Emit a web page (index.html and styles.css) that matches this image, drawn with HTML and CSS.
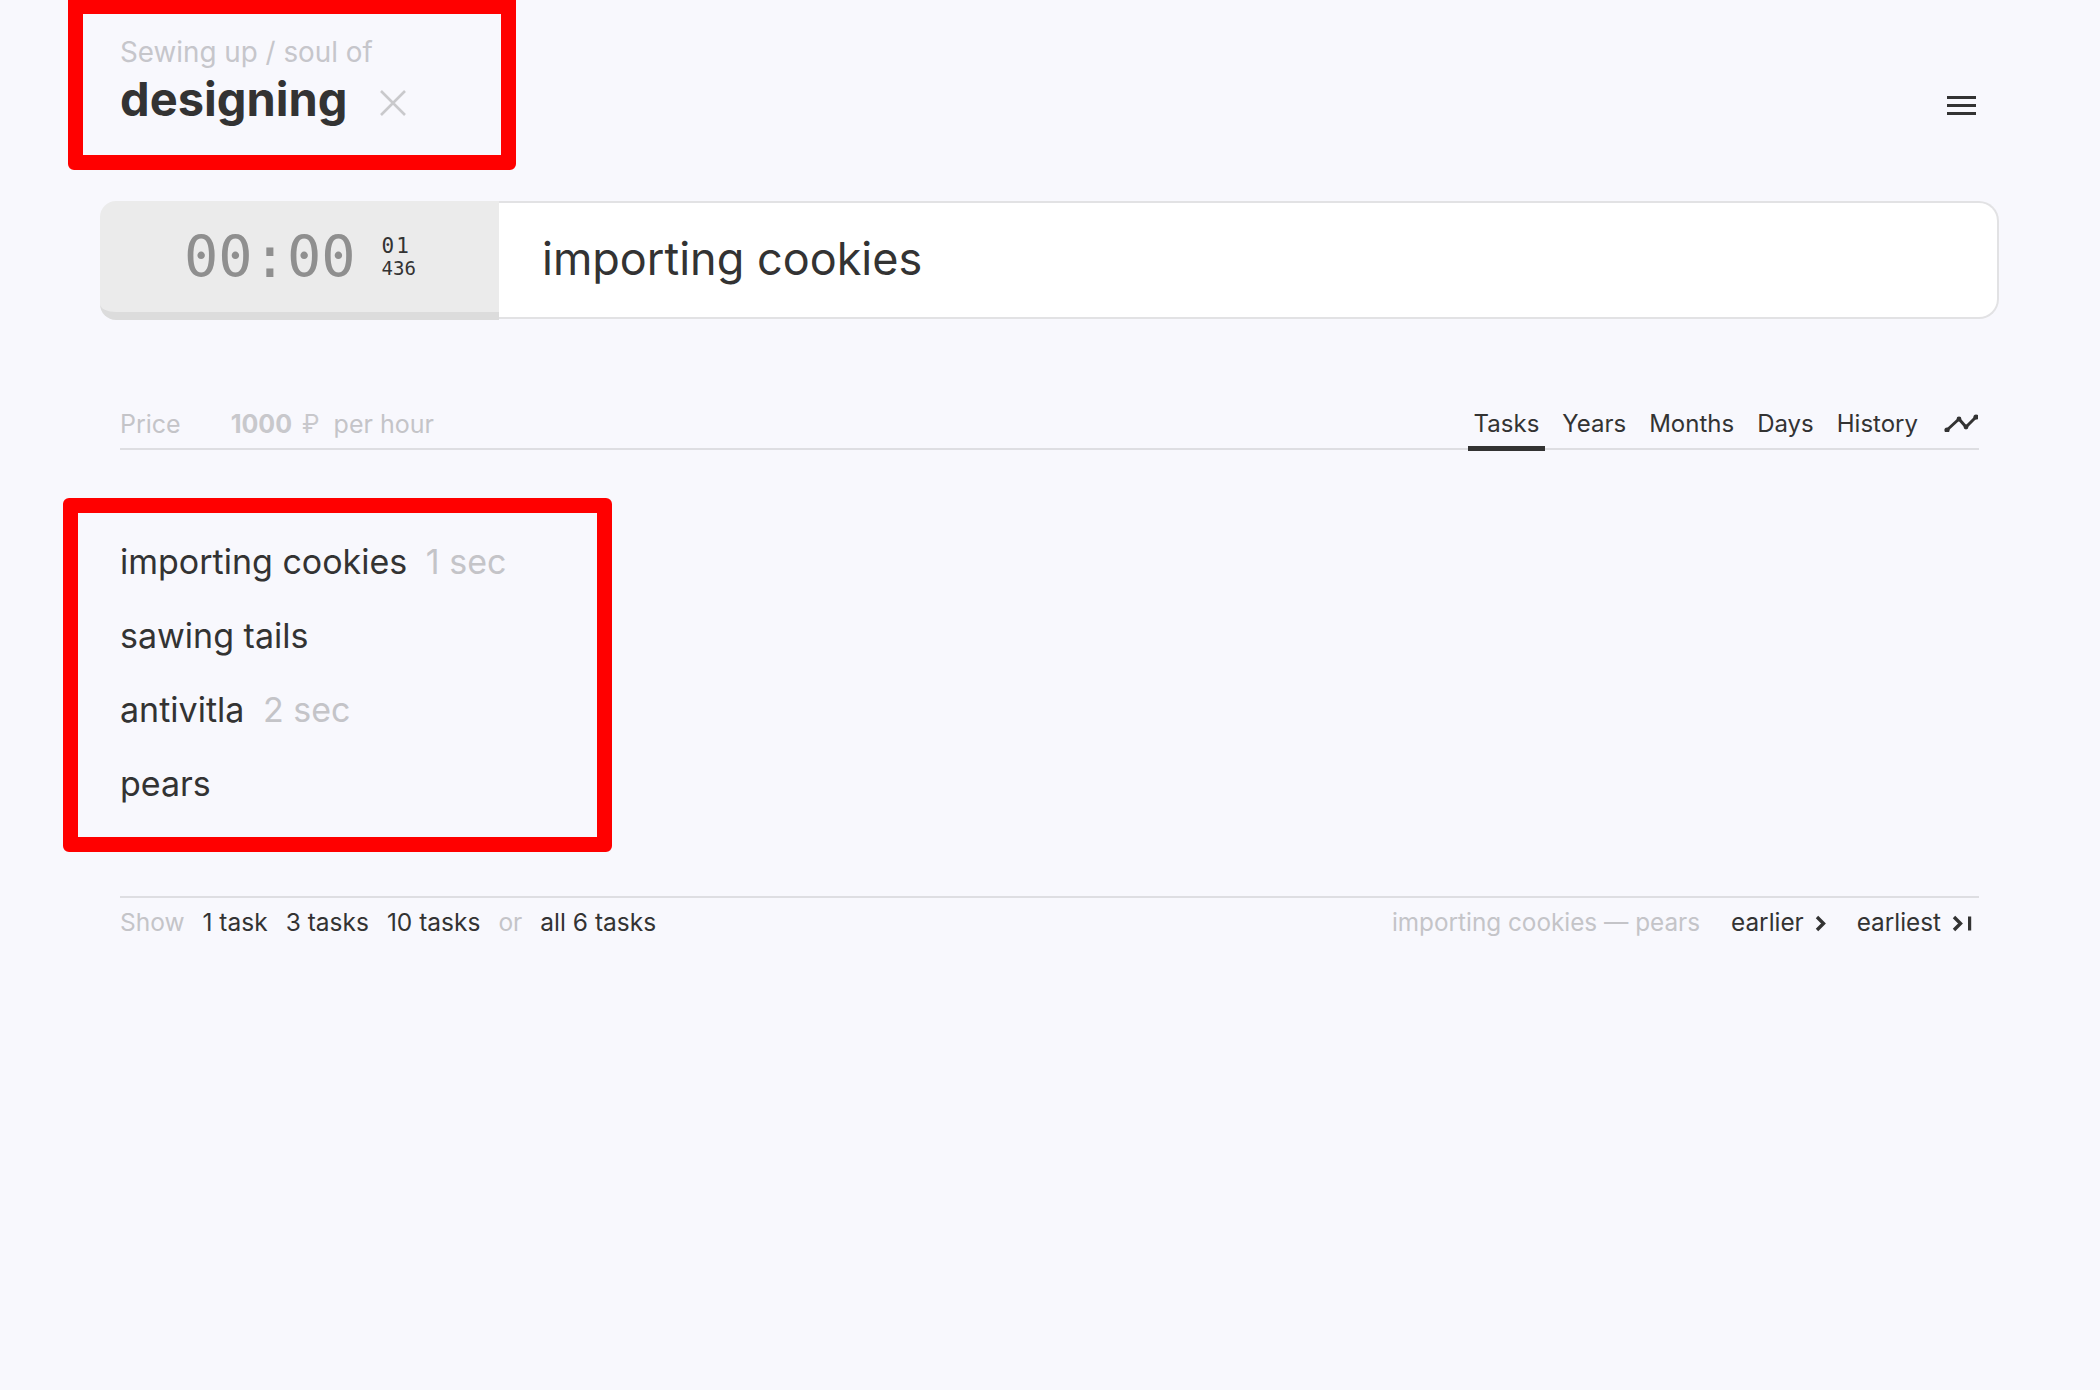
FILE: index.html
```html
<!DOCTYPE html>
<html lang="en">
<head>
<meta charset="utf-8">
<title>designing</title>
<link rel="stylesheet" href="styles.css">
</head>
<body>
<div class="app">
  <header class="top">
    <div class="crumb-box">
      <div class="crumb">Sewing up / soul of</div>
      <div class="title-row">
        <h1 class="title">designing</h1>
        <svg class="close" width="28" height="28" viewBox="0 0 28 28"><path d="M2 2 L26 26 M26 2 L2 26" stroke="#c9c9cc" stroke-width="2.6" fill="none"/></svg>
      </div>
    </div>
    <svg class="menu" width="29" height="20" viewBox="0 0 29 20"><rect x="0" y="0" width="29" height="3" fill="#333"/><rect x="0" y="8" width="29" height="3" fill="#333"/><rect x="0" y="16" width="29" height="3" fill="#333"/></svg>
  </header>

  <section class="timer-bar">
    <div class="timer">
      <span class="clock">00:00</span>
      <span class="sub"><span class="sub-min">01</span><span class="sub-ms">436</span></span>
    </div>
    <div class="task-input">importing cookies</div>
  </section>

  <nav class="bar">
    <div class="price">
      <span class="muted">Price</span>
      <span class="amount"><b>1000</b> ₽</span>
      <span class="muted">per hour</span>
    </div>
    <div class="tabs">
      <span class="tab active">Tasks</span>
      <span class="tab">Years</span>
      <span class="tab">Months</span>
      <span class="tab">Days</span>
      <span class="tab">History</span>
      <svg class="chart" width="34" height="18" viewBox="0 0 34 18"><polyline points="3,16 15,5 22,13 32,3" fill="none" stroke="#333" stroke-width="3" stroke-linejoin="round"/><circle cx="3" cy="16" r="2.6" fill="#333"/><circle cx="15" cy="5" r="2.4" fill="#333"/><circle cx="22" cy="13" r="2.4" fill="#333"/><circle cx="32" cy="3" r="2.6" fill="#333"/></svg>
    </div>
  </nav>

  <ul class="task-list">
    <li>importing cookies <span class="dur">1 sec</span></li>
    <li>sawing tails</li>
    <li>antivitla <span class="dur">2 sec</span></li>
    <li>pears</li>
  </ul>

  <footer class="foot">
    <div class="show">
      <span class="muted">Show</span>
      <span>1 task</span>
      <span>3 tasks</span>
      <span>10 tasks</span>
      <span class="muted">or</span>
      <span>all 6 tasks</span>
    </div>
    <div class="pager">
      <span class="muted">importing cookies — pears</span>
      <span class="pg">earlier <svg width="11" height="17" viewBox="0 0 11 17"><path d="M2 2 L8.5 8.5 L2 15" fill="none" stroke="#333" stroke-width="3.4"/></svg></span>
      <span class="pg">earliest <svg width="21" height="17" viewBox="0 0 21 17"><path d="M2 2 L8.5 8.5 L2 15" fill="none" stroke="#333" stroke-width="3.4"/><rect x="16" y="1.5" width="3.2" height="14" fill="#333"/></svg></span>
    </div>
  </footer>
</div>
</body>
</html>
```

FILE: styles.css
```css
* { box-sizing: border-box; }
html, body {
  margin: 0;
  padding: 0;
  background: #f8f8fd;
}
body {
  font-family: Inter, "Noto Sans", "Liberation Sans", sans-serif;
  color: #333;
}
.app {
  width: 2100px;
  min-height: 1390px;
}

/* header */
.top {
  display: flex;
  justify-content: space-between;
  align-items: flex-start;
  padding: 0 124px 0 68px;
}
.crumb-box {
  width: 448px;
  height: 170px;
  border: 15px solid #ff0000;
  border-top-width: 14px;
  border-radius: 0 0 6px 6px;
  padding: 22px 0 0 37px;
}
.crumb {
  font-size: 27.8px;
  line-height: 32px;
  color: #c6c6cb;
}
.title-row {
  display: flex;
  align-items: center;
  margin-top: 3px;
}
.title {
  margin: 0;
  font-size: 47px;
  line-height: 56px;
  font-weight: 700;
  color: #333;
}
.close {
  margin-left: 32px;
  margin-top: 8px;
}
.menu {
  margin-top: 96px;
}

/* timer bar */
.timer-bar {
  display: flex;
  margin: 31px 101px 0 100px;
  height: 119px;
}
.timer {
  width: 399px;
  height: 119px;
  background: #ebebeb;
  border-bottom: 8px solid #dcdcdc;
  border-radius: 16px 0 0 16px;
  display: flex;
  align-items: center;
  padding-left: 84px;
}
.clock {
  font-family: "DejaVu Sans Mono", "Liberation Mono", monospace;
  font-size: 57px;
  color: #8f8f8f;
  line-height: 1;
  margin-top: 2px;
}
.sub {
  display: flex;
  flex-direction: column;
  align-items: flex-start;
  margin-left: 26px;
  font-family: "DejaVu Sans Mono", "Liberation Mono", monospace;
  line-height: 22px;
  color: #333;
}
.sub-min {
  font-size: 21px;
  letter-spacing: 2px;
}
.sub-ms {
  font-size: 19px;
}
.task-input {
  flex: 1;
  height: 118px;
  background: #fff;
  border: 2px solid #e2e2e4;
  border-left: none;
  border-radius: 0 20px 20px 0;
  display: flex;
  align-items: center;
  padding-left: 43px;
  font-size: 45px;
  color: #333;
  padding-bottom: 4px;
}

/* nav bar */
.bar {
  display: flex;
  justify-content: space-between;
  align-items: flex-end;
  margin: 89px 121px 0 120px;
  border-bottom: 2px solid #dedee2;
  font-size: 24px;
  line-height: 30px;
}
.price {
  display: flex;
  padding-bottom: 9px;
  font-size: 25px;
}
.muted { color: #c4c4c8; }
.amount {
  color: #c8c8cc;
  margin-left: 50px;
  margin-right: 14px;
  word-spacing: 3px;
}
.amount b { font-weight: 700; }
.tabs {
  display: flex;
  align-items: flex-end;
}
.tab {
  padding: 0 6px 7px;
  margin-right: 11px;
  border-bottom: 5px solid transparent;
  margin-bottom: -3px;
}
.tab.active {
  border-bottom-color: #333;
}
.chart {
  margin: 0 1px 16px 9px;
}

/* task list */
.task-list {
  list-style: none;
  margin: 48px 0 0 63px;
  width: 549px;
  height: 354px;
  border: 15px solid #ff0000;
  border-radius: 6px;
  padding: 12px 0 0 42px;
}
.task-list li {
  font-size: 34px;
  line-height: 74px;
  color: #333;
}
.dur {
  color: #c4c4c8;
  margin-left: 9px;
}

/* footer */
.foot {
  display: flex;
  justify-content: space-between;
  margin: 44px 121px 0 120px;
  border-top: 2px solid #dedee2;
  padding-top: 9px;
  font-size: 24px;
  line-height: 30px;
}
.show {
  display: flex;
  gap: 18px;
  font-size: 24.5px;
}
.pager {
  display: flex;
  gap: 31px;
  padding-right: 6px;
  font-size: 24.3px;
}
.pg {
  display: flex;
  align-items: center;
  gap: 11px;
}
.pg svg { margin-top: 2px; }
```
